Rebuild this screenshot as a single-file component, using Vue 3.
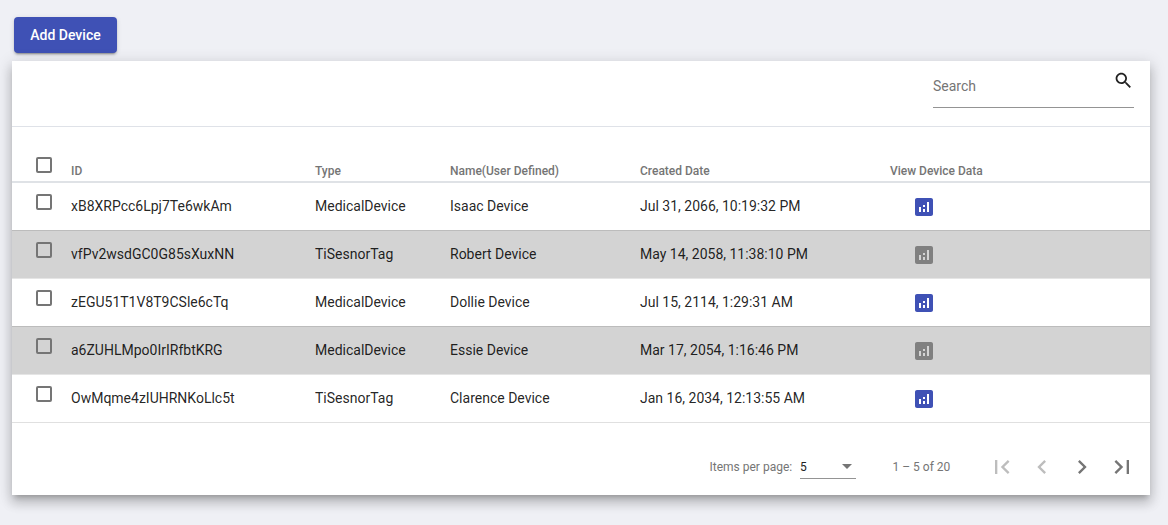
<script setup>
const columns = ['ID', 'Type', 'Name(User Defined)', 'Created Date', 'View Device Data']
const devices = [
  { id: 'xB8XRPcc6Lpj7Te6wkAm', type: 'MedicalDevice', name: 'Isaac Device', created: 'Jul 31, 2066, 10:19:32 PM', active: true },
  { id: 'vfPv2wsdGC0G85sXuxNN', type: 'TiSesnorTag', name: 'Robert Device', created: 'May 14, 2058, 11:38:10 PM', active: false },
  { id: 'zEGU51T1V8T9CSle6cTq', type: 'MedicalDevice', name: 'Dollie Device', created: 'Jul 15, 2114, 1:29:31 AM', active: true },
  { id: 'a6ZUHLMpo0IrIRfbtKRG', type: 'MedicalDevice', name: 'Essie Device', created: 'Mar 17, 2054, 1:16:46 PM', active: false },
  { id: 'OwMqme4zIUHRNKoLlc5t', type: 'TiSesnorTag', name: 'Clarence Device', created: 'Jan 16, 2034, 12:13:55 AM', active: true },
]
const pageButtons = [
  { label: 'First page', path: 'M18.41 16.59L13.82 12l4.59-4.59L17 6l-6 6 6 6zM6 6h2v12H6z', disabled: true },
  { label: 'Previous page', path: 'M15.41 7.41L14 6l-6 6 6 6 1.41-1.41L10.83 12z', disabled: true },
  { label: 'Next page', path: 'M10 6L8.59 7.41 13.17 12l-4.58 4.59L10 18l6-6z', disabled: false },
  { label: 'Last page', path: 'M5.59 7.41L10.18 12l-4.59 4.59L7 18l6-6-6-6zM16 6h2v12h-2z', disabled: false },
]
</script>

<template>
  <main class="page">
    <button class="add">Add Device</button>
    <section class="card">
      <div class="toolbar">
        <label class="search">
          <span>Search</span>
          <svg viewBox="0 0 24 24" width="21" height="21"><path d="M15.5 14h-.79l-.28-.27C15.41 12.59 16 11.11 16 9.5 16 5.91 13.09 3 9.5 3S3 5.91 3 9.5 5.91 16 9.5 16c1.61 0 3.09-.59 4.23-1.57l.27.28v.79l5 4.99L20.49 19l-4.99-5zm-6 0C7.01 14 5 11.99 5 9.5S7.01 5 9.5 5 14 7.01 14 9.5 11.99 14 9.5 14z" /></svg>
        </label>
      </div>
      <div class="row head">
        <span class="box"></span>
        <span v-for="c in columns" :key="c">{{ c }}</span>
      </div>
      <div v-for="d in devices" :key="d.id" class="row" :class="{ inactive: !d.active }">
        <span class="box"></span>
        <span>{{ d.id }}</span>
        <span>{{ d.type }}</span>
        <span>{{ d.name }}</span>
        <span>{{ d.created }}</span>
        <svg class="chart" viewBox="0 0 24 24" width="24" height="24"><path d="M19 3H5c-1.1 0-2 .9-2 2v14c0 1.1.9 2 2 2h14c1.1 0 2-.9 2-2V5c0-1.100-.9-2-2-2zM9 17H7v-5h2v5zm4 0h-2v-3h2v3zm0-5h-2v-2h2v2zm4 5h-2V7h2v10z" /></svg>
      </div>
      <footer class="pager">
        <span class="per">Items per page:</span>
        <div class="select"><span>5</span><i></i></div>
        <span class="range">1 – 5 of 20</span>
        <button v-for="b in pageButtons" :key="b.label" class="nav" :aria-label="b.label" :disabled="b.disabled">
          <svg viewBox="0 0 24 24" width="28" height="28"><path :d="b.path" /></svg>
        </button>
      </footer>
    </section>
  </main>
</template>

<style>
body { margin: 0; background: #eff0f5; }
</style>

<style scoped>
.page {
  box-sizing: border-box;
  height: 525px;
  padding: 17px 18px 0 12px;
  font-family: Roboto, sans-serif;
  font-size: 14px;
  color: rgba(0, 0, 0, .87);
  overflow: hidden;
}
button { border: 0; padding: 0; font-family: inherit; }
svg { display: block; fill: currentColor; }
.add {
  display: block;
  width: 103px;
  height: 36px;
  margin: 0 0 8px 2px;
  border-radius: 4px;
  background: #3f51b5;
  color: #fff;
  font-size: 14px;
  font-weight: 500;
  line-height: 36px;
  box-shadow: 0 3px 1px -2px rgba(0, 0, 0, .2), 0 2px 2px rgba(0, 0, 0, .14), 0 1px 5px rgba(0, 0, 0, .12);
}
.card {
  height: 434px;
  background: #fff;
  box-shadow: 0 5px 5px -3px rgba(0, 0, 0, .2), 0 8px 10px 1px rgba(0, 0, 0, .14), 0 3px 14px 2px rgba(0, 0, 0, .12);
}
.toolbar {
  box-sizing: border-box;
  height: 66px;
  padding-right: 16px;
  border-bottom: 1px solid #dfe2e8;
  display: flex;
  justify-content: flex-end;
}
.search {
  box-sizing: border-box;
  width: 201px;
  height: 47px;
  border-bottom: 1px solid #949494;
  display: flex;
  justify-content: space-between;
  color: #757575;
}
.search span { line-height: 16px; margin-top: 17px; }
.search svg { color: #212121; margin: 9px 0 0; }
.row {
  box-sizing: border-box;
  height: 48px;
  padding-left: 24px;
  border-bottom: 1px solid #bcbcbc;
  display: grid;
  grid-template-columns: 35px 244px 135px 190px 250px 1fr;
  line-height: 47px;
  white-space: nowrap;
}
.row:nth-last-child(2) { border-color: #e0e0e0; }
.row.inactive { background: #d3d3d3; border-color: #e5e5e5; }
.row.head {
  height: 56px;
  border-bottom: 2px solid #dfe2e6;
  color: #757575;
  font-size: 12px;
  font-weight: 500;
  line-height: 88px;
}
.box {
  box-sizing: border-box;
  width: 16px;
  height: 16px;
  margin-top: 11px;
  border: 2px solid #757575;
  border-radius: 2px;
}
.head .box { margin-top: 30px; }
.chart { margin: 12px 0 0 22px; color: #3f51b5; }
.inactive .chart { color: #808080; }
.pager {
  height: 72px;
  padding-top: 8px;
  display: flex;
  align-items: center;
  color: #757575;
  font-size: 12px;
}
.per { width: 90.5px; margin-left: 697.5px; white-space: nowrap; }
.select {
  box-sizing: border-box;
  width: 56px;
  height: 24px;
  border-bottom: 1px solid #949494;
  display: flex;
  align-items: center;
  justify-content: space-between;
  padding-right: 4px;
  color: #212121;
}
.select i { border: 5px solid transparent; border-top-color: #757575; border-bottom: 0; }
.range { width: 89.5px; margin-left: 36.5px; white-space: nowrap; }
.nav { width: 40px; height: 40px; padding: 6px; background: none; color: #757575; }
.nav:disabled { color: #bdbdbd; }
</style>
